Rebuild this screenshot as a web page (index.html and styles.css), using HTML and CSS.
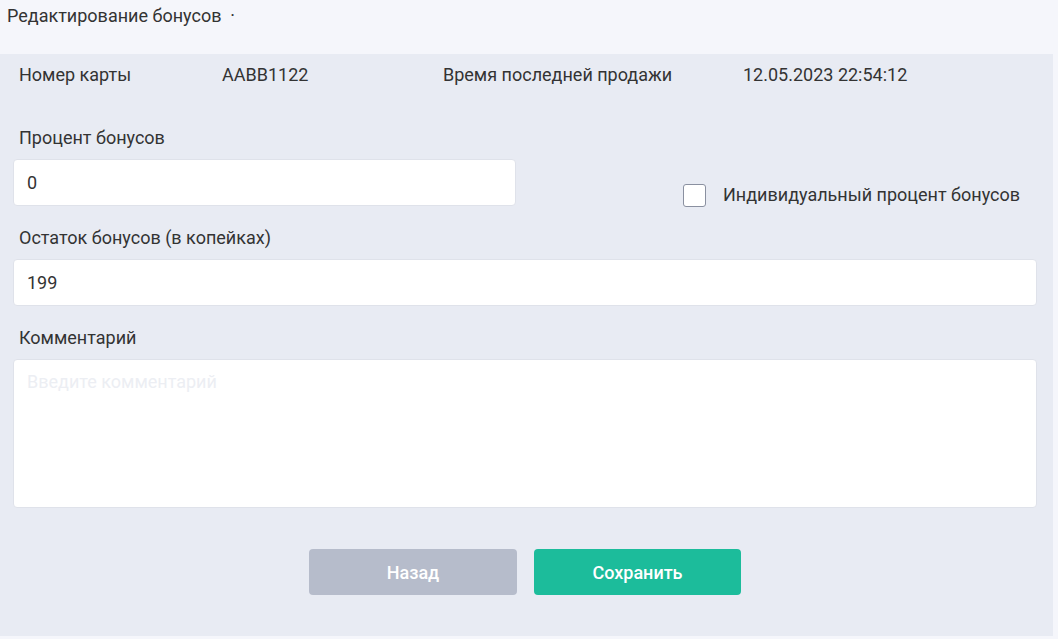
FILE: index.html
```html
<!DOCTYPE html>
<html lang="ru">
<head>
    <meta charset="UTF-8">
    <meta name="viewport" content="width=device-width, initial-scale=1.0">
    <title>Редактирование бонусов</title>
    <link rel="stylesheet" href="styles.css">
</head>
<body>

<div class="header">Редактирование бонусов &nbsp;·</div>

<div class="panel">
    <div class="info">
        <span>Номер карты</span>
        <span>AABB1122</span>
        <span>Время последней продажи</span>
        <span>12.05.2023 22:54:12</span>
    </div>

    <div class="field">
        <label class="label" for="percent">Процент бонусов</label>
        <div class="percentRow">
            <input id="percent" class="input short" type="text" value="0">
            <label class="check">
                <input type="checkbox">
                <span class="box"></span>
                Индивидуальный процент бонусов
            </label>
        </div>
    </div>

    <div class="field">
        <label class="label" for="rest">Остаток бонусов (в копейках)</label>
        <input id="rest" class="input" type="text" value="199">
    </div>

    <div class="field">
        <label class="label" for="comment">Комментарий</label>
        <textarea id="comment" class="input area" placeholder="Введите комментарий"></textarea>
    </div>

    <div class="buttons">
        <button class="btn back">Назад</button>
        <button class="btn save">Сохранить</button>
    </div>
</div>

</body>
</html>
```

FILE: styles.css
```css
body {
    margin: 0;
    background-color: #f5f6fb;
    font-family: Roboto, "Liberation Sans", sans-serif;
    font-size: 18px;
    color: #333;
}

.header {
    height: 54px;
    box-sizing: border-box;
    padding: 4px 0 0 7px;
    line-height: 24px;
}

.panel {
    width: 1053px;
    box-sizing: border-box;
    padding: 9px 16px 41px 13px;
    background-color: #e8ebf3;
}

.info {
    display: grid;
    grid-template-columns: 203px 221px 300px auto;
    padding-left: 6px;
    line-height: 24px;
    margin-bottom: 39px;
}

.field {
    margin-bottom: 20px;
}

.label {
    display: block;
    padding-left: 6px;
    line-height: 24px;
    margin-bottom: 9px;
}

.input {
    display: block;
    width: 100%;
    height: 47px;
    box-sizing: border-box;
    padding: 0 13px;
    border: 1px solid #dfe2ea;
    border-radius: 4px;
    background-color: #fff;
    font-family: inherit;
    font-size: 18px;
    color: #333;
    outline: none;
}

.input.short {
    width: 503px;
}

.area {
    height: 149px;
    padding: 11px 13px;
    resize: none;
}

.area::placeholder {
    color: #eceef3;
}

.percentRow {
    display: flex;
    align-items: flex-end;
}

.check {
    display: flex;
    align-items: center;
    margin-left: 167px;
    line-height: 24px;
    position: relative;
    top: 1px;
}

.check input {
    display: none;
}

.box {
    width: 23px;
    height: 23px;
    box-sizing: border-box;
    border: 1px solid #8a90a0;
    border-radius: 3px;
    background-color: #fff;
    margin-right: 17px;
}

.buttons {
    display: flex;
    justify-content: center;
    gap: 17px;
    margin-top: 41px;
}

.btn {
    width: 208px;
    height: 46px;
    border: none;
    border-radius: 4px;
    color: #fff;
    font-family: inherit;
    font-size: 18px;
    font-weight: 500;
    cursor: pointer;
}

.back {
    background-color: #b6bccb;
}

.save {
    width: 207px;
    background-color: #1cbc9b;
}
```
